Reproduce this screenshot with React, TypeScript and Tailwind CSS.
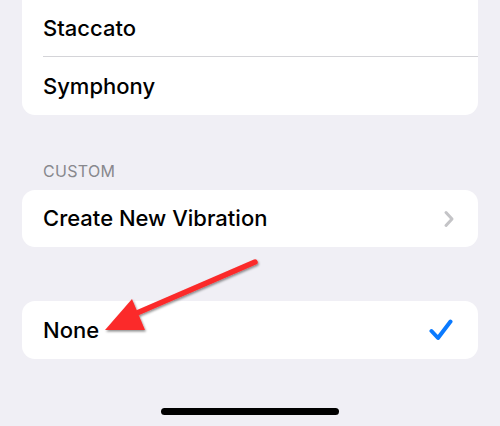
import React from "react";

const font = { fontFamily: "Inter, 'Liberation Sans', sans-serif" };

const Row = ({
  label,
  right,
  divider,
  tall = true,
}: {
  label: string;
  right?: React.ReactNode;
  divider?: boolean;
  tall?: boolean;
}) => (
  <div className={`flex items-center pl-[21px] ${tall ? "h-[58px]" : "h-[57px]"}`}>
    <div
      className={`flex h-full flex-1 items-center pr-[22px] ${
        divider ? "border-b border-[#d4d4d8]" : ""
      }`}
    >
      <span className="flex-1 text-[22px] font-medium text-black">{label}</span>
      {right}
    </div>
  </div>
);

const Chevron = () => (
  <svg width="12" height="18" viewBox="0 0 12 18" className="mr-[1px]">
    <path
      d="M3 2.5 L9 9 L3 15.5"
      fill="none"
      stroke="#c4c4c7"
      strokeWidth="3"
      strokeLinecap="round"
      strokeLinejoin="round"
    />
  </svg>
);

const Check = () => (
  <svg width="24" height="22" viewBox="0 0 24 22" className="mr-[3px]">
    <path
      d="M2.5 12 L9 19 L21.5 2.5"
      fill="none"
      stroke="#0a7aff"
      strokeWidth="4"
      strokeLinecap="round"
      strokeLinejoin="round"
    />
  </svg>
);

export default function App() {
  return (
    <div
      className="relative h-[426px] w-[500px] overflow-hidden bg-[#f0eff5]"
      style={font}
    >
      <div className="px-[22px]">
        {/* existing patterns, top cut off */}
        <div className="rounded-b-[13px] bg-white">
          <Row label="Staccato" divider tall={false} />
          <Row label="Symphony" />
        </div>

        <div className="mt-[48px] pl-[21px] text-[16px] uppercase leading-none tracking-[0.3px] text-[#88888d]">
          Custom
        </div>

        <div className="mt-[11px] rounded-[13px] bg-white">
          <Row label="Create New Vibration" right={<Chevron />} tall={false} />
        </div>

        <div className="mt-[54px] rounded-[13px] bg-white">
          <Row label="None" right={<Check />} />
        </div>
      </div>

      {/* home indicator */}
      <div className="mt-[49px] flex justify-center">
        <div className="h-[7px] w-[178px] rounded-full bg-black" />
      </div>

      {/* annotation arrow */}
      <svg
        className="pointer-events-none absolute left-0 top-0"
        width="500"
        height="426"
        viewBox="0 0 500 426"
      >
        <defs>
          <filter id="sh" x="-20%" y="-20%" width="140%" height="140%">
            <feDropShadow dx="1" dy="1.5" stdDeviation="1" floodColor="#000" floodOpacity="0.45" />
          </filter>
        </defs>
        <g filter="url(#sh)">
          <line x1="255" y1="262" x2="130" y2="316" stroke="#fb2b2b" strokeWidth="5.5" strokeLinecap="round" />
          <polygon points="105,330 132,299 145,330" fill="#fb2b2b" />
        </g>
      </svg>
    </div>
  );
}
